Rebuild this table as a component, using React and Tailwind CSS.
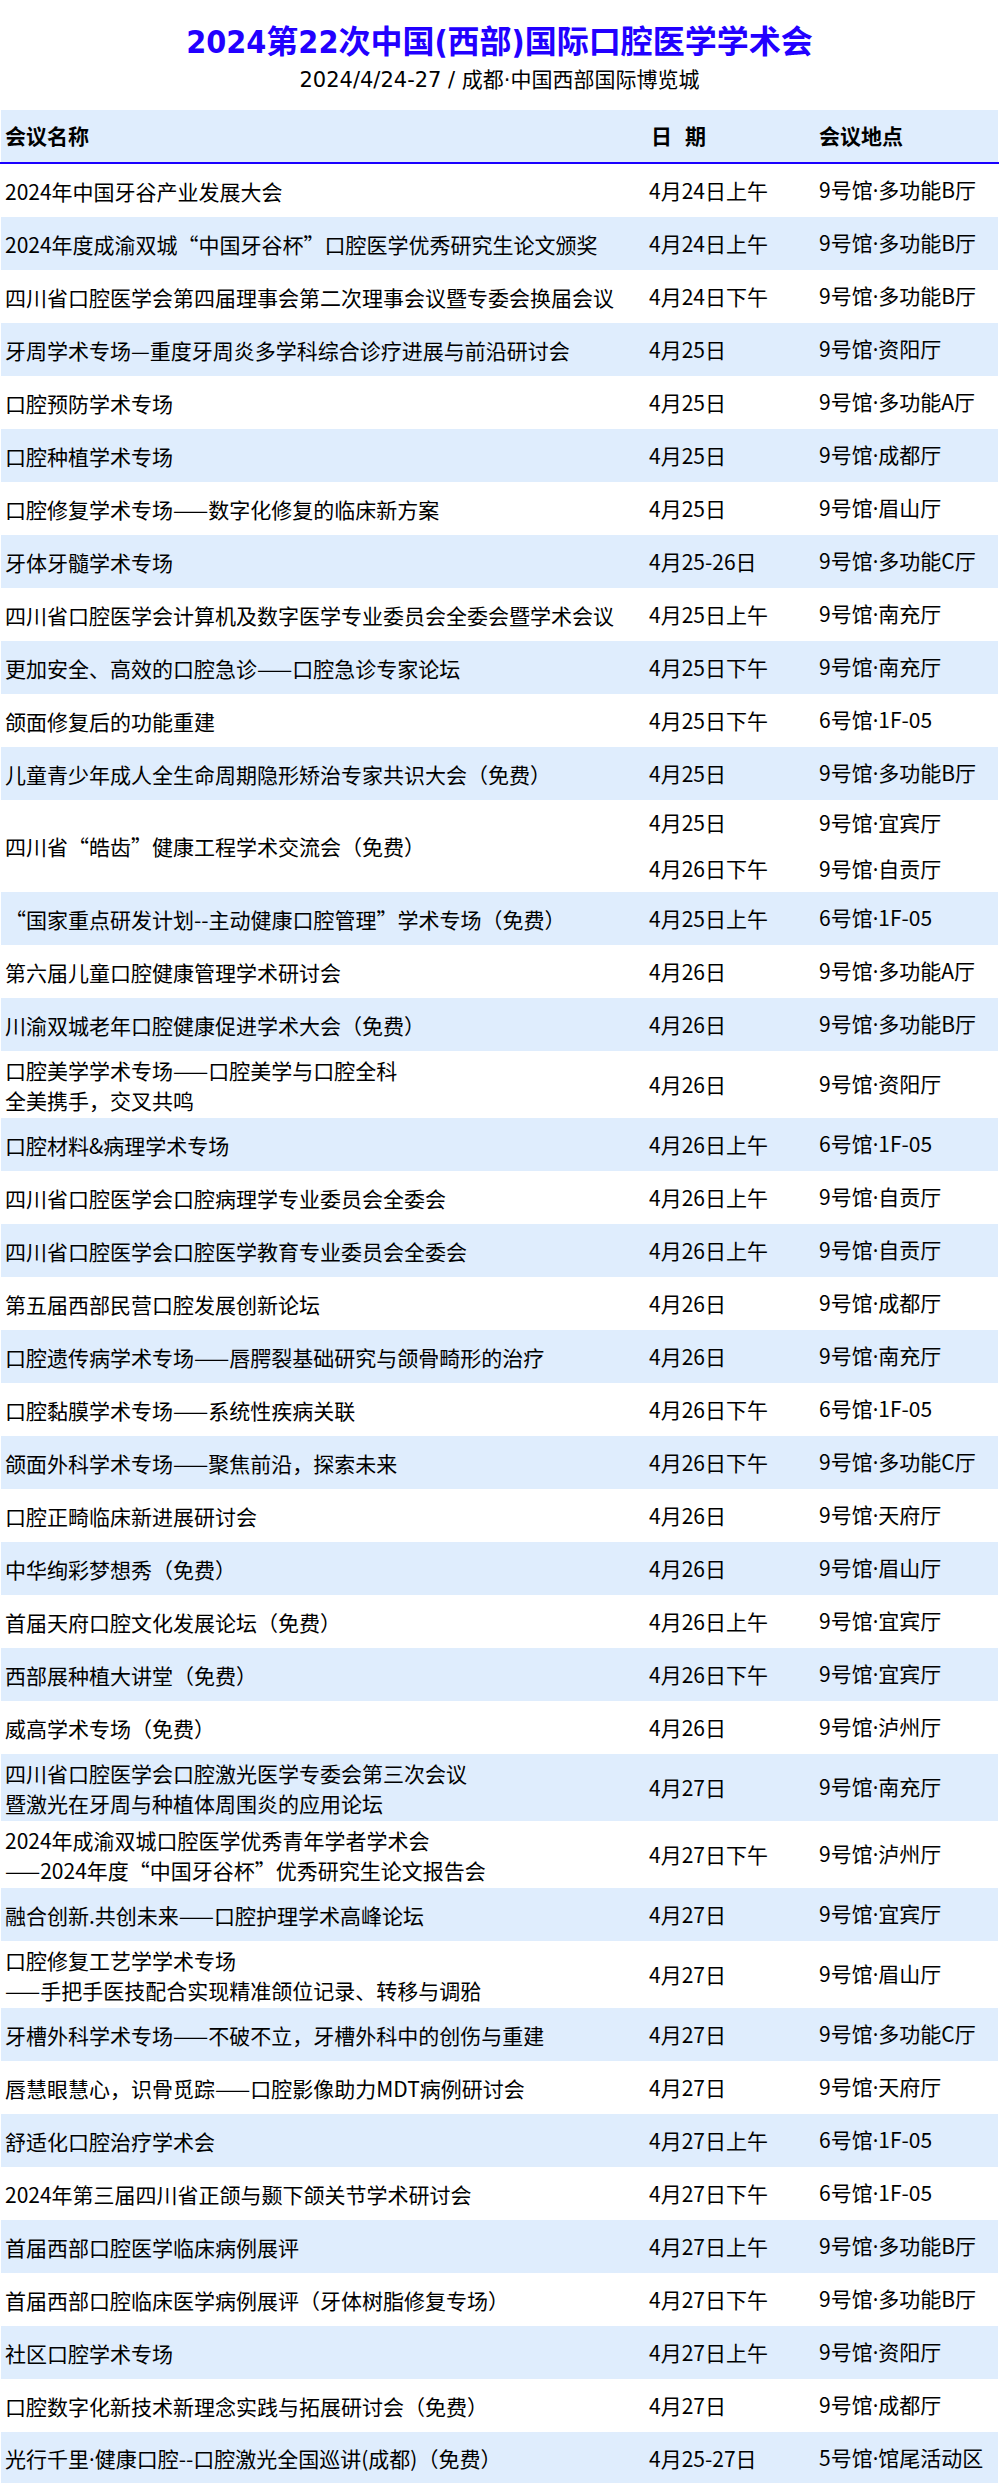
import React from 'react';

// 会议日程数据：name 为字符串或两行数组，slots 为 [日期, 地点]
const ROWS = [
  { name: '2024年中国牙谷产业发展大会', slots: [['4月24日上午', '9号馆·多功能B厅']] },
  { name: '2024年度成渝双城“中国牙谷杯”口腔医学优秀研究生论文颁奖', slots: [['4月24日上午', '9号馆·多功能B厅']] },
  { name: '四川省口腔医学会第四届理事会第二次理事会议暨专委会换届会议', slots: [['4月24日下午', '9号馆·多功能B厅']] },
  { name: '牙周学术专场—重度牙周炎多学科综合诊疗进展与前沿研讨会', slots: [['4月25日', '9号馆·资阳厅']] },
  { name: '口腔预防学术专场', slots: [['4月25日', '9号馆·多功能A厅']] },
  { name: '口腔种植学术专场', slots: [['4月25日', '9号馆·成都厅']] },
  { name: '口腔修复学术专场——数字化修复的临床新方案', slots: [['4月25日', '9号馆·眉山厅']] },
  { name: '牙体牙髓学术专场', slots: [['4月25-26日', '9号馆·多功能C厅']] },
  { name: '四川省口腔医学会计算机及数字医学专业委员会全委会暨学术会议', slots: [['4月25日上午', '9号馆·南充厅']] },
  { name: '更加安全、高效的口腔急诊——口腔急诊专家论坛', slots: [['4月25日下午', '9号馆·南充厅']] },
  { name: '颌面修复后的功能重建', slots: [['4月25日下午', '6号馆·1F-05']] },
  { name: '儿童青少年成人全生命周期隐形矫治专家共识大会（免费）', slots: [['4月25日', '9号馆·多功能B厅']] },
  {
    name: '四川省“皓齿”健康工程学术交流会（免费）',
    slots: [['4月25日', '9号馆·宜宾厅'], ['4月26日下午', '9号馆·自贡厅']],
  },
  { name: '“国家重点研发计划--主动健康口腔管理”学术专场（免费）', slots: [['4月25日上午', '6号馆·1F-05']] },
  { name: '第六届儿童口腔健康管理学术研讨会', slots: [['4月26日', '9号馆·多功能A厅']] },
  { name: '川渝双城老年口腔健康促进学术大会（免费）', slots: [['4月26日', '9号馆·多功能B厅']] },
  { name: ['口腔美学学术专场——口腔美学与口腔全科', '全美携手，交叉共鸣'], slots: [['4月26日', '9号馆·资阳厅']] },
  { name: '口腔材料&病理学术专场', slots: [['4月26日上午', '6号馆·1F-05']] },
  { name: '四川省口腔医学会口腔病理学专业委员会全委会', slots: [['4月26日上午', '9号馆·自贡厅']] },
  { name: '四川省口腔医学会口腔医学教育专业委员会全委会', slots: [['4月26日上午', '9号馆·自贡厅']] },
  { name: '第五届西部民营口腔发展创新论坛', slots: [['4月26日', '9号馆·成都厅']] },
  { name: '口腔遗传病学术专场——唇腭裂基础研究与颌骨畸形的治疗', slots: [['4月26日', '9号馆·南充厅']] },
  { name: '口腔黏膜学术专场——系统性疾病关联', slots: [['4月26日下午', '6号馆·1F-05']] },
  { name: '颌面外科学术专场——聚焦前沿，探索未来', slots: [['4月26日下午', '9号馆·多功能C厅']] },
  { name: '口腔正畸临床新进展研讨会', slots: [['4月26日', '9号馆·天府厅']] },
  { name: '中华绚彩梦想秀（免费）', slots: [['4月26日', '9号馆·眉山厅']] },
  { name: '首届天府口腔文化发展论坛（免费）', slots: [['4月26日上午', '9号馆·宜宾厅']] },
  { name: '西部展种植大讲堂（免费）', slots: [['4月26日下午', '9号馆·宜宾厅']] },
  { name: '威高学术专场（免费）', slots: [['4月26日', '9号馆·泸州厅']] },
  {
    name: ['四川省口腔医学会口腔激光医学专委会第三次会议', '暨激光在牙周与种植体周围炎的应用论坛'],
    slots: [['4月27日', '9号馆·南充厅']],
  },
  {
    name: ['2024年成渝双城口腔医学优秀青年学者学术会', '——2024年度“中国牙谷杯”优秀研究生论文报告会'],
    slots: [['4月27日下午', '9号馆·泸州厅']],
  },
  { name: '融合创新.共创未来——口腔护理学术高峰论坛', slots: [['4月27日', '9号馆·宜宾厅']] },
  {
    name: ['口腔修复工艺学学术专场', '——手把手医技配合实现精准颌位记录、转移与调𬌗'],
    slots: [['4月27日', '9号馆·眉山厅']],
  },
  { name: '牙槽外科学术专场——不破不立，牙槽外科中的创伤与重建', slots: [['4月27日', '9号馆·多功能C厅']] },
  { name: '唇慧眼慧心，识骨觅踪——口腔影像助力MDT病例研讨会', slots: [['4月27日', '9号馆·天府厅']] },
  { name: '舒适化口腔治疗学术会', slots: [['4月27日上午', '6号馆·1F-05']] },
  { name: '2024年第三届四川省正颌与颞下颌关节学术研讨会', slots: [['4月27日下午', '6号馆·1F-05']] },
  { name: '首届西部口腔医学临床病例展评', slots: [['4月27日上午', '9号馆·多功能B厅']] },
  { name: '首届西部口腔临床医学病例展评（牙体树脂修复专场）', slots: [['4月27日下午', '9号馆·多功能B厅']] },
  { name: '社区口腔学术专场', slots: [['4月27日上午', '9号馆·资阳厅']] },
  { name: '口腔数字化新技术新理念实践与拓展研讨会（免费）', slots: [['4月27日', '9号馆·成都厅']] },
  { name: '光行千里·健康口腔--口腔激光全国巡讲(成都)（免费）', slots: [['4月25-27日', '5号馆·馆尾活动区']] },
];

const cjk = { fontFamily: '"Noto Sans CJK SC", "Noto Sans", sans-serif' };
const latin = { fontFamily: '"Noto Sans", "Liberation Sans", sans-serif' };

// 中点用西文字体渲染，避免 CJK 字体里的全角宽度
const Txt = ({ children }) => {
  const parts = children.split('·');
  return parts.map((p, i) => (
    <React.Fragment key={i}>
      {i > 0 && <span style={latin}>·</span>}
      {p}
    </React.Fragment>
  ));
};

const Row = ({ row, striped }) => {
  const twoLine = Array.isArray(row.name);
  const multiSlot = row.slots.length > 1;
  const height = multiSlot ? 'h-[92px]' : twoLine ? 'h-[67px]' : 'h-[53px]';

  return (
    <div className={`flex ${height} ${striped ? 'bg-[#dfedfd]' : 'bg-white'}`}>
      {/* 会议名称 */}
      <div className="w-[644px] shrink-0 flex flex-col justify-center pl-[4px] leading-[30px] whitespace-nowrap">
        {twoLine ? (
          row.name.map((line) => <div key={line}>{line}</div>)
        ) : (
          <div>
            <Txt>{row.name}</Txt>
          </div>
        )}
      </div>
      {/* 日期 + 地点 */}
      <div className="flex-1 flex flex-col">
        {row.slots.map(([date, place]) => (
          <div key={date + place} className="flex-1 flex items-center whitespace-nowrap">
            <div className="w-[170px] shrink-0 pl-[4px]">{date}</div>
            <div className="flex-1 pl-[4px]">
              <Txt>{place}</Txt>
            </div>
          </div>
        ))}
      </div>
    </div>
  );
};

export default function App() {
  return (
    <div className="w-[999px] h-[2483px] overflow-hidden bg-white text-black">
      {/* 标题 */}
      <div className="pt-[22px] pb-[16px] text-center">
        <h1
          className="text-[32px] leading-[40px] font-bold text-[#2200ff]"
          style={{ fontFamily: '"DejaVu Sans Condensed", "DejaVu Sans", "Noto Sans CJK SC", sans-serif' }}
        >
          2024第22次中国(西部)国际口腔医学学术会
        </h1>
        <p
          className="mt-[4px] text-[21px] leading-[28px]"
          style={{ fontFamily: '"DejaVu Sans", "Noto Sans CJK SC", sans-serif' }}
        >
          2024/4/24-27 / 成都·中国西部国际博览城
        </p>
      </div>

      {/* 表格 */}
      <div className="text-[21px]" style={cjk}>
        <div className="border-b-[2px] border-[#1a00ff]">
          <div className="mx-[1px] h-[52px] flex items-center bg-[#dfedfd] font-bold whitespace-nowrap">
            <div className="w-[644px] shrink-0 pl-[4px]">会议名称</div>
            <div className="w-[170px] shrink-0 pl-[6px]">
              日<span className="inline-block w-[13px]" />期
            </div>
            <div className="flex-1 pl-[4px]">会议地点</div>
          </div>
        </div>
        <div className="mx-[1px]">
          {ROWS.map((row, i) => (
            <Row key={i} row={row} striped={i % 2 === 1} />
          ))}
        </div>
      </div>
    </div>
  );
}
